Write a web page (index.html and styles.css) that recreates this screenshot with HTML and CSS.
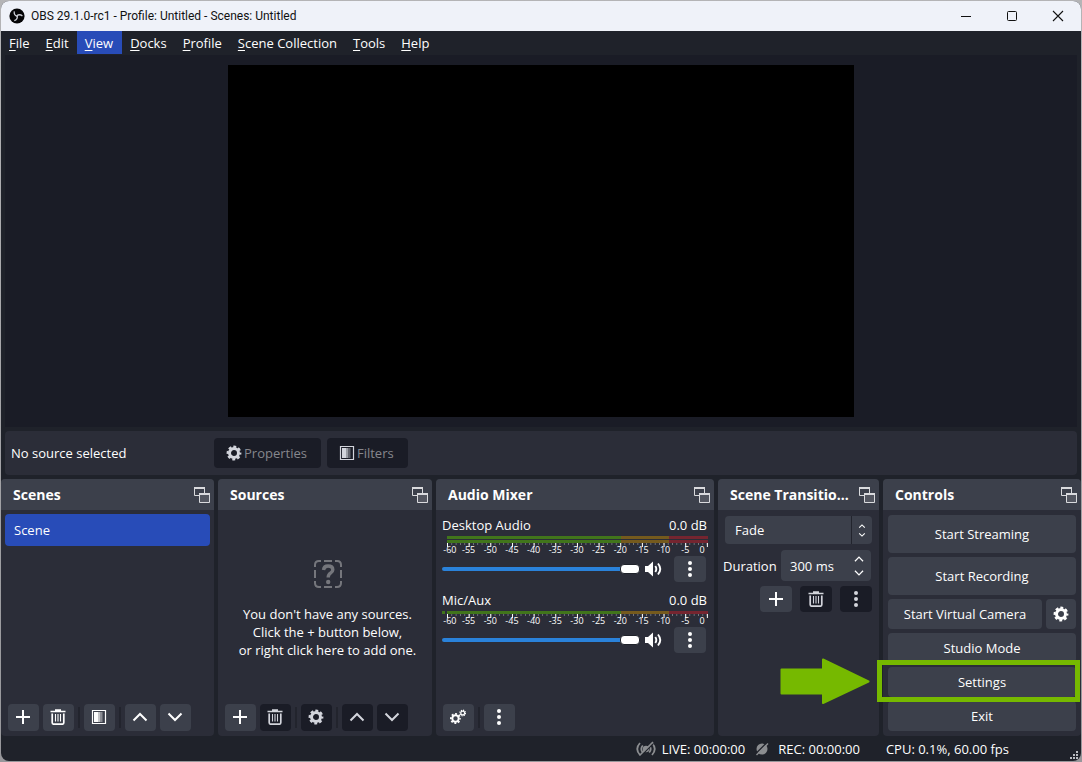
FILE: index.html
```html
<!DOCTYPE html>
<html lang="en">
<head>
<meta charset="utf-8">
<title>OBS 29.1.0-rc1</title>
<link rel="stylesheet" href="styles.css">
</head>
<body>
<svg class="defs" aria-hidden="true">
  <symbol id="plus" viewBox="0 0 16 16"><path d="M8 1v14M1 8h14" stroke="currentColor" stroke-width="2"/></symbol>
  <symbol id="trash" viewBox="0 0 16 16"><path d="M0.5 2.5h15M5 1h6" fill="none" stroke="currentColor" stroke-width="1.6"/><path d="M2.2 4.5v9q0 1.7 1.7 1.7h8.200q1.700 0 1.700-1.700v-9" fill="none" stroke="currentColor" stroke-width="1.700"/><path d="M5.500 5v7.500M8 5v7.500M10.500 5v7.500" stroke="currentColor" stroke-width="1.100"/></symbol>
  <symbol id="filter" viewBox="0 0 16 16"><path d="M1.500 1.500h13v13h-13z" fill="none" stroke="currentColor" stroke-width="1.200"/><path d="M3 3h4v10H3z" fill="currentColor"/><path d="M7 3h2v10H7z" fill="currentColor" opacity=".7"/><path d="M9 3h2v10H9z" fill="currentColor" opacity=".4"/><path d="M11 3h1v10h-1z" fill="currentColor" opacity=".2"/></symbol>
  <symbol id="up" viewBox="0 0 16 16"><path d="M1.500 11.500 8 5l6.500 6.500" fill="none" stroke="currentColor" stroke-width="2"/></symbol>
  <symbol id="down" viewBox="0 0 16 16"><path d="M1.500 4.500 8 11l6.500-6.500" fill="none" stroke="currentColor" stroke-width="2"/></symbol>
  <symbol id="gear" viewBox="0 0 16 16"><circle cx="8" cy="8" r="4.500" fill="none" stroke="currentColor" stroke-width="3"/><circle cx="8" cy="8" r="6.300" fill="none" stroke="currentColor" stroke-width="2.200" stroke-dasharray="2.900 2.048" stroke-dashoffset="1.450"/></symbol>
  <symbol id="gears" viewBox="0 0 16 16"><circle cx="5.500" cy="9.500" r="3.200" fill="none" stroke="currentColor" stroke-width="2"/><circle cx="5.500" cy="9.500" r="4.600" fill="none" stroke="currentColor" stroke-width="1.800" stroke-dasharray="1.900 1.713" stroke-dashoffset=".950"/><circle cx="12.700" cy="4" r="1.900" fill="none" stroke="currentColor" stroke-width="1.200"/><circle cx="12.700" cy="4" r="2.800" fill="none" stroke="currentColor" stroke-width="1.200" stroke-dasharray="1.200 .999"/></symbol>
  <symbol id="dots" viewBox="0 0 16 16"><circle cx="8" cy="2" r="2" fill="currentColor"/><circle cx="8" cy="8" r="2" fill="currentColor"/><circle cx="8" cy="14" r="2" fill="currentColor"/></symbol>
  <symbol id="popout" viewBox="0 0 16 16"><path d="M5 8.500H.5V1h10v5" fill="none" stroke="currentColor"/><path d="M0 0h11v2H0zM5 6h11v2H5z" fill="currentColor"/><path d="M5.500 7h10v8.500h-10z" fill="currentColor" fill-opacity=".15" stroke="currentColor"/></symbol>
  <symbol id="speaker" viewBox="0 0 17 16"><path d="M0 5h3l5-4.500v15L3 11H0z" fill="currentColor"/><path d="M10.300 5q2 3 0 6M13 2.500q4.500 5.500 0 11" fill="none" stroke="currentColor" stroke-width="1.900"/></symbol>
  <symbol id="spin" viewBox="0 0 8 14"><path d="m1 4 3-3 3 3M1 10l3 3 3-3" fill="none" stroke="currentColor" stroke-width="1.200"/></symbol>
</svg>

<div class="window">
  <header class="titlebar">
    <svg class="logo" viewBox="0 0 16 16"><circle cx="8" cy="8" r="7.600" fill="#050507"/><g fill="none" stroke="#c9cbd2" stroke-width="1.300"><path d="M8.200 8.500C6 7.500 4.800 5.800 5.300 3.300"/><path d="M8.200 8.500C6 7.500 4.800 5.800 5.300 3.300" transform="rotate(120 8 8)"/><path d="M8.200 8.500C6 7.500 4.800 5.800 5.300 3.300" transform="rotate(240 8 8)"/></g></svg>
    <span class="title">OBS 29.1.0-rc1 - Profile: Untitled - Scenes: Untitled</span>
    <button class="caption" aria-label="Minimize"><svg viewBox="0 0 12 12"><path d="M1 6.500h10" stroke="#111"/></svg></button>
    <button class="caption" aria-label="Maximize"><svg viewBox="0 0 12 12"><rect x="1.500" y="1.500" width="9" height="9" rx="1" fill="none" stroke="#111"/></svg></button>
    <button class="caption" aria-label="Close"><svg viewBox="0 0 12 12"><path d="m1 1 10 10M11 1 1 11" stroke="#111" stroke-width="1.100"/></svg></button>
  </header>

  <nav class="menubar">
    <button class="menu"><u>F</u>ile</button>
    <button class="menu"><u>E</u>dit</button>
    <button class="menu active"><u>V</u>iew</button>
    <button class="menu"><u>D</u>ocks</button>
    <button class="menu"><u>P</u>rofile</button>
    <button class="menu"><u>S</u>cene Collection</button>
    <button class="menu"><u>T</u>ools</button>
    <button class="menu"><u>H</u>elp</button>
  </nav>

  <main class="preview"><div class="canvas"></div></main>

  <section class="context">
    <span class="context-name">No source selected</span>
    <button class="context-btn" disabled><svg class="icon"><use href="#gear"/></svg>Properties</button>
    <button class="context-btn" disabled><svg class="icon"><use href="#filter"/></svg>Filters</button>
  </section>

  <div class="docks">
    <section class="dock">
      <div class="dock-head"><h2>Scenes</h2><button class="pop" aria-label="Float Scenes"><svg class="icon"><use href="#popout"/></svg></button></div>
      <ul class="scene-list"><li class="scene">Scene</li></ul>
      <div class="tools">
        <button class="tool" aria-label="Add scene"><svg class="icon"><use href="#plus"/></svg></button>
        <button class="tool" aria-label="Remove scene"><svg class="icon"><use href="#trash"/></svg></button>
        <span class="sep"></span>
        <button class="tool" aria-label="Scene filters"><svg class="icon"><use href="#filter"/></svg></button>
        <span class="sep"></span>
        <button class="tool" aria-label="Move scene up"><svg class="icon"><use href="#up"/></svg></button>
        <button class="tool" aria-label="Move scene down"><svg class="icon"><use href="#down"/></svg></button>
      </div>
    </section>

    <section class="dock">
      <div class="dock-head"><h2>Sources</h2><button class="pop" aria-label="Float Sources"><svg class="icon"><use href="#popout"/></svg></button></div>
      <div class="empty">
        <svg class="unknown" viewBox="0 0 28 28" fill="none" stroke="currentColor"><path d="M1 7V5q0-4 4-4h2M10 1h8M21 1h2q4 0 4 4v2M27 10v8M27 21v2q0 4-4 4h-2M18 27h-8M7 27H5q-4 0-4-4v-2M1 18v-8" stroke-width="2"/><path d="M9.500 10q.5-4 4.500-4 4.800 0 4.800 3.700 0 2-2.300 3.500Q14.200 14.700 14.200 17.500" stroke-width="3.400"/><circle cx="14.200" cy="22" r="2.200" fill="currentColor" stroke="none"/></svg>
        <p>You don't have any sources.<br>Click the + button below,<br>or right click here to add one.</p>
      </div>
      <div class="tools">
        <button class="tool" aria-label="Add source"><svg class="icon"><use href="#plus"/></svg></button>
        <button class="tool" disabled aria-label="Remove source"><svg class="icon"><use href="#trash"/></svg></button>
        <span class="sep"></span>
        <button class="tool" disabled aria-label="Source properties"><svg class="icon"><use href="#gear"/></svg></button>
        <span class="sep"></span>
        <button class="tool" disabled aria-label="Move source up"><svg class="icon"><use href="#up"/></svg></button>
        <button class="tool" disabled aria-label="Move source down"><svg class="icon"><use href="#down"/></svg></button>
      </div>
    </section>

    <section class="dock">
      <div class="dock-head"><h2>Audio Mixer</h2><button class="pop" aria-label="Float Audio Mixer"><svg class="icon"><use href="#popout"/></svg></button></div>
      <div class="mixer">
        <div class="channel">
          <div class="channel-top"><label for="desk">Desktop Audio</label><span>0.0 dB</span></div>
          <div class="meters"><div class="meter"></div><div class="meter"></div></div>
          <div class="ticks"></div>
          <div class="scale"><span>-60</span><span>-55</span><span>-50</span><span>-45</span><span>-40</span><span>-35</span><span>-30</span><span>-25</span><span>-20</span><span>-15</span><span>-10</span><span>-5</span><span>0</span></div>
          <div class="fader"><input id="desk" type="range" value="100"><button class="mute" aria-label="Mute Desktop Audio"><svg viewBox="0 0 17 16"><use href="#speaker"/></svg></button><button class="small-btn" aria-label="Desktop Audio options"><svg class="icon"><use href="#dots"/></svg></button></div>
        </div>
        <div class="channel">
          <div class="channel-top"><label for="mic">Mic/Aux</label><span>0.0 dB</span></div>
          <div class="meters mono"><div class="meter"></div></div>
          <div class="ticks"></div>
          <div class="scale"><span>-60</span><span>-55</span><span>-50</span><span>-45</span><span>-40</span><span>-35</span><span>-30</span><span>-25</span><span>-20</span><span>-15</span><span>-10</span><span>-5</span><span>0</span></div>
          <div class="fader"><input id="mic" type="range" value="100"><button class="mute" aria-label="Mute Mic/Aux"><svg viewBox="0 0 17 16"><use href="#speaker"/></svg></button><button class="small-btn" aria-label="Mic/Aux options"><svg class="icon"><use href="#dots"/></svg></button></div>
        </div>
      </div>
      <div class="tools">
        <button class="tool" aria-label="Advanced audio properties"><svg class="icon"><use href="#gears"/></svg></button>
        <span class="sep"></span>
        <button class="tool" aria-label="Mixer menu"><svg class="icon"><use href="#dots"/></svg></button>
      </div>
    </section>

    <section class="dock">
      <div class="dock-head"><h2>Scene Transitio...</h2><button class="pop" aria-label="Float Scene Transitions"><svg class="icon"><use href="#popout"/></svg></button></div>
      <div class="transitions">
        <div class="combo"><select aria-label="Transition"><option>Fade</option></select><svg class="combo-arrows"><use href="#spin"/></svg></div>
        <div class="duration"><label for="dur">Duration</label><div class="spinbox"><input id="dur" type="text" value="300 ms"><span class="steps"><svg class="step"><use href="#up"/></svg><svg class="step"><use href="#down"/></svg></span></div></div>
        <div class="trans-tools">
          <button class="small-btn" aria-label="Add transition"><svg class="icon"><use href="#plus"/></svg></button>
          <button class="small-btn" disabled aria-label="Remove transition"><svg class="icon"><use href="#trash"/></svg></button>
          <button class="small-btn" disabled aria-label="Transition properties"><svg class="icon"><use href="#dots"/></svg></button>
        </div>
      </div>
    </section>

    <section class="dock">
      <div class="dock-head"><h2>Controls</h2><button class="pop" aria-label="Float Controls"><svg class="icon"><use href="#popout"/></svg></button></div>
      <div class="controls">
        <button class="ctl tall">Start Streaming</button>
        <button class="ctl tall">Start Recording</button>
        <div class="ctl-row"><button class="ctl">Start Virtual Camera</button><button class="ctl cog" aria-label="Virtual camera settings"><svg class="icon"><use href="#gear"/></svg></button></div>
        <button class="ctl">Studio Mode</button>
        <div class="marked">
          <button class="ctl">Settings</button>
          <span class="frame"></span>
          <svg class="arrow" viewBox="0 0 90 46"><path d="M1.500 11.500H43V1.500L88.500 23.500 43 45V35.500H1.500z" fill="#76b900" stroke="#76b900" stroke-width="2" stroke-linejoin="round"/></svg>
        </div>
        <button class="ctl">Exit</button>
      </div>
    </section>
  </div>

  <footer class="status">
    <span class="stat"><svg class="live" viewBox="0 0 20 16" fill="none" stroke="currentColor" stroke-width="1.800"><path d="M4 2Q-1.500 8 4 14M6.800 4.500q-3 3.500 0 7M16 2q5.500 6 0 12M13.200 4.500q3 3.500 0 7"/><circle cx="10" cy="8" r="3.200" fill="currentColor" stroke="none"/><path d="M4.800 15 17.300 2.500" stroke="#1f222a" stroke-width="1.200"/><path d="M3.500 14.500 17 1" stroke-width="1.600"/></svg>LIVE: 00:00:00</span>
    <span class="stat rec"><svg class="dot" viewBox="0 0 14 14"><circle cx="7" cy="7" r="5.500" fill="currentColor"/><path d="M0 12.500 12 .5" stroke="#1f222a" stroke-width="1.500"/><path d="M1.500 13 13 1.500" stroke="currentColor" stroke-width="1.500"/></svg>REC: 00:00:00</span>
    <span class="stat cpu">CPU: 0.1%, 60.00 fps</span>
    <svg class="grip" viewBox="0 0 9 9" fill="#b9bbc0"><path d="M6 0h2v2H6zM3 3h2v2H3zM6 3h2v2H6zM0 6h2v2H0zM3 6h2v2H3zM6 6h2v2H6z"/></svg>
  </footer>
</div>
</body>
</html>
```
FILE: styles.css
```css
* { box-sizing: border-box; }
html, body { height: 100%; }
body {
  margin: 0;
  padding: 1px;
  background: linear-gradient(#b4b4b6, #97979b);
  font-family: "Open Sans", "Noto Sans", sans-serif;
  font-size: 13px;
  line-height: 18px;
  color: #fefefe;
}
button, input, select { font: inherit; color: inherit; border: 0; margin: 0; padding: 0; background: none; }
.defs { position: absolute; width: 0; height: 0; }
.icon { width: 16px; height: 16px; display: block; flex: none; }

.window {
  height: 100%;
  display: flex;
  flex-direction: column;
  background: #1f222a;
  border-radius: 8px;
  overflow: hidden;
}

.titlebar {
  display: flex;
  align-items: center;
  height: 30px;
  flex: none;
  padding-left: 8px;
  background: #eff2f9;
  color: #111;
}
.logo { width: 16px; height: 16px; margin-right: 6px; }
.title { flex: 1; font-family: Roboto, "Open Sans", sans-serif; font-size: 12px; }
.caption { width: 46px; height: 30px; display: grid; place-items: center; }
.caption svg { width: 12px; height: 12px; }

.menubar { display: flex; flex: none; height: 24px; }
.menu { height: 23px; padding: 0 8px; }
.menu u { text-underline-offset: 2px; text-decoration-thickness: 1px; }
.menu.active { padding: 0 9px 0 8px; background: #284cb8; }

.preview {
  flex: 1;
  min-height: 0;
  margin: 0 4px;
  padding: 10px;
  background: #1a1c26;
  display: flex;
  justify-content: center;
}
.canvas { height: 100%; aspect-ratio: 16 / 9; background: #000; }

.context {
  flex: none;
  display: flex;
  align-items: center;
  gap: 6px;
  height: 44px;
  margin: 4px;
  padding: 0 6px;
  border-radius: 4px;
  background: #2b2d38;
}
.context-name { width: 197px; }
.context-btn {
  display: flex;
  align-items: center;
  justify-content: center;
  gap: 2px;
  height: 30px;
  padding: 0 14px 0 12px;
  border-radius: 4px;
  background: #1a1c26;
  color: #86878d;
}
.context-btn .icon { color: #d3d5dc; }

.docks {
  flex: none;
  display: grid;
  grid-template-columns: 213fr 214fr 278fr 161fr 198fr;
  gap: 4px;
}
.dock {
  min-width: 0;
  display: flex;
  flex-direction: column;
  background: #2b2d38;
  border-radius: 4px;
}
.dock-head {
  display: flex;
  align-items: center;
  justify-content: space-between;
  height: 31px;
  flex: none;
  padding: 0 4px 0 12px;
  background: #3c404b;
  border-radius: 4px 4px 0 0;
}
.dock-head h2 {
  margin: 0;
  font-size: 14px;
  font-weight: 700;
  white-space: nowrap;
}
.pop { color: #d9dadd; }

.scene-list { flex: 1; list-style: none; margin: 0; padding: 4px; }
.scene { padding: 7px 9px; border-radius: 4px; background: #284cb8; }

.empty {
  flex: 1;
  display: flex;
  flex-direction: column;
  align-items: center;
  padding: 50px 0 0 5px;
  text-align: center;
}
.empty p { margin: 17px 0 0; white-space: nowrap; }
.unknown { width: 28px; height: 28px; color: #75767c; }

.tools { display: flex; align-items: center; gap: 4px; padding: 0 7px 5px; }
.tool, .small-btn {
  display: grid;
  place-items: center;
  flex: none;
  width: 31px;
  height: 27px;
  border-radius: 4px;
  background: #3c404b;
}
.tool { padding: 0 1px 1px 0; }
.small-btn { width: 32px; height: 26px; }
.tool:disabled, .small-btn:disabled { background: #1a1c26; color: #d3d5dc; }
.sep { width: 2px; height: 21px; background: #22242d; }

.mixer { flex: 1; display: flex; flex-direction: column; gap: 9px; padding: 6px 6px 0; }
.channel-top { display: flex; justify-content: space-between; padding-right: 1px; }
.meters { display: grid; gap: 1px; margin-top: 2px; padding-left: 5px; }
.mono { background: linear-gradient(90deg, #41751b 3px, transparent 3px); }
.meter { height: 3px; background: linear-gradient(90deg, #41751b 0 66.6%, #755a1d 66.6% 85%, #752530 85%); }
.ticks {
  height: 4px;
  margin-left: 5px;
  background:
    linear-gradient(90deg, #fff 1px, transparent 1px) 0 0 / calc((100% - 1px) / 12) 4px repeat-x,
    linear-gradient(90deg, #777982 1px, transparent 1px) 0 0 / calc((100% - 1px) / 60) 2px repeat-x;
}
.scale {
  display: flex;
  height: 7px;
  font-size: 9px;
  line-height: 6px;
  text-align: center;
}
.scale span { flex: 22 0 0; }
.scale span:first-child { flex-grow: 16; }
.scale span:last-child { flex-grow: 12; }
.fader { display: flex; align-items: center; margin-top: 2px; padding-right: 2px; }
.fader input {
  flex: 1;
  min-width: 0;
  height: 12px;
  appearance: none;
}
.fader input::-webkit-slider-runnable-track { height: 4px; border-radius: 2px; background: #2a82da; }
.fader input::-webkit-slider-thumb {
  appearance: none;
  width: 20px;
  height: 10px;
  margin-top: -3px;
  border: 1px solid #1f222a;
  border-radius: 4px;
  background: #fff;
}
.mute { width: 17px; height: 16px; margin: 0 12px 0 5px; }
.mute svg { display: block; width: 17px; height: 16px; }

.transitions { padding: 6px 7px; display: flex; flex-direction: column; }
.combo { position: relative; height: 28px; }
.combo select {
  appearance: none;
  width: 100%;
  height: 28px;
  padding: 0 10px;
  border-radius: 4px;
  background: linear-gradient(#22242d, #22242d) right 20px top / 1px 100% no-repeat #3c404b;
}
.combo-arrows { position: absolute; right: 6px; top: 8px; width: 8px; height: 13px; pointer-events: none; }
.duration { display: flex; align-items: center; justify-content: space-between; margin: 6px 1px 5px -2px; }
.duration label { flex: none; }
.spinbox { display: flex; width: 90px; height: 31px; border-radius: 4px; background: #3c404b; }
.spinbox input { flex: 1; min-width: 0; padding-left: 9px; }
.steps { display: flex; flex-direction: column; justify-content: center; gap: 4px; padding-right: 7px; }
.step { width: 10px; height: 10px; }
.trans-tools { display: flex; justify-content: flex-end; gap: 8px; }

.controls { display: flex; flex-direction: column; gap: 4px; padding: 5px; }
.ctl {
  width: 100%;
  height: 30px;
  border-radius: 4px;
  background: #3c404b;
  white-space: nowrap;
}
.tall { height: 38px; }
.ctl-row { display: flex; gap: 4px; }
.cog { flex: none; width: 30px; display: grid; place-items: center; }
.marked { position: relative; height: 30px; }
.frame {
  position: absolute;
  inset: -7px -4px -5px -11px;
  border: 5px solid #76b900;
  pointer-events: none;
}
.arrow { position: absolute; right: calc(100% + 18px); top: -9px; width: 90px; height: 46px; }

.status {
  position: relative;
  flex: none;
  display: flex;
  align-items: center;
  justify-content: flex-end;
  height: 25px;
  padding-right: 72px;
}
.stat { display: flex; align-items: center; gap: 6px; }
.stat svg { color: #8b8d90; }
.live { width: 20px; height: 16px; }
.dot { width: 14px; height: 14px; }
.rec { margin-left: 10px; gap: 9px; }
.cpu { margin-left: 26px; }
.grip { position: absolute; right: 2px; bottom: 1px; width: 9px; height: 9px; }
```
